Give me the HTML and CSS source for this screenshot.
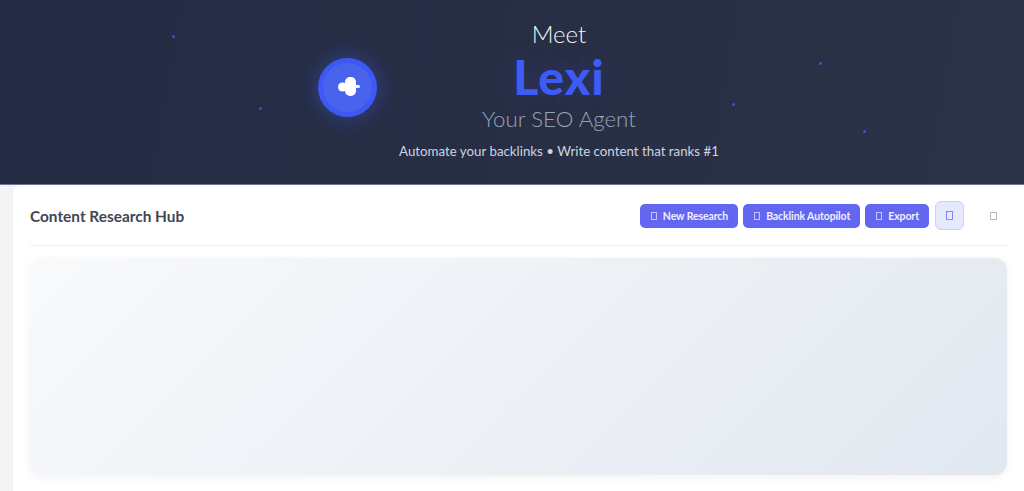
FILE: index.html
```html
<!DOCTYPE html>
<html>
<head>
    <title>Lexi - Content Research Hub</title>
    <link rel="stylesheet" href="styles.css">
</head>
<body>
    <header class="hero">
        <span class="star star-1"></span>
        <span class="star star-2"></span>
        <span class="star star-3"></span>
        <span class="star star-4"></span>
        <span class="star star-5"></span>
        <div class="logo">
            <div class="logo-inner">
                <svg width="24" height="20" viewBox="0 0 24 20">
                    <rect x="9" y="0" width="11" height="19" rx="5" fill="#fff"/>
                    <circle cx="6.500" cy="10" r="4.500" fill="#fff"/>
                    <rect x="16" y="8" width="8" height="3" rx="1.500" fill="#fff"/>
                </svg>
            </div>
        </div>
        <div class="hero-text">
            <div class="meet">Meet</div>
            <h1 class="name">Lexi</h1>
            <div class="role">Your SEO Agent</div>
            <p class="tagline">Automate your backlinks • Write content that ranks #1</p>
        </div>
    </header>

    <main class="card">
        <div class="card-head">
            <h2>Content Research Hub</h2>
            <div class="actions">
                <button class="btn"><i class="tofu"></i>New Research</button>
                <button class="btn"><i class="tofu"></i>Backlink Autopilot</button>
                <button class="btn"><i class="tofu"></i>Export</button>
                <button class="btn-soft"><i class="tofu tofu-blue"></i></button>
                <button class="btn-plain"><i class="tofu tofu-grey"></i></button>
            </div>
        </div>
        <div class="panel"></div>
    </main>
</body>
</html>
```

FILE: styles.css
```css
* { box-sizing: border-box; }
html, body { height: 100%; }
body { margin: 0; background: #f3f4f6; font-family: Lato, "Noto Sans", sans-serif; overflow: hidden; }

.hero { position: relative; height: 185px; padding: 0 0 4px 13px; display: flex; align-items: center; justify-content: center; gap: 22px; background: linear-gradient(100deg, #232a42, #2c3347); border-bottom: 1px solid #6d7599; }
.star { position: absolute; width: 3px; height: 3px; border-radius: 50%; background: #3b50e0; }
.star-1 { left: 172px; top: 35px; }
.star-2 { left: 259px; top: 107px; }
.star-3 { left: 819px; top: 62px; }
.star-4 { left: 732px; top: 103px; }
.star-5 { left: 863px; top: 130px; }

.logo { width: 59px; height: 59px; margin-bottom: 6px; padding: 5px; border-radius: 50%; background: #3d59f5; box-shadow: 0 0 22px rgba(63, 91, 246, 0.5); }
.logo-inner { width: 100%; height: 100%; border-radius: 50%; background: #4a63ec; display: flex; align-items: center; justify-content: center; }

.hero-text { text-align: center; width: 320px; }
.meet { font-size: 24px; font-weight: 300; line-height: 30px; color: #f1f5f9; }
.name { margin: 0; font-size: 48px; font-weight: 900; line-height: 56px; letter-spacing: 1px; color: #3f5bf6; text-shadow: 0 0 24px rgba(63, 91, 246, 0.25); }
.role { font-size: 22.300px; font-weight: 300; line-height: 28px; color: #94a3b8; }
.tagline { margin: 8px 0 0; font-size: 13.300px; line-height: 20px; white-space: nowrap; color: #cbd5e1; }

.card { height: 306px; margin-left: 13px; padding: 0 17px; background: #fff; border-radius: 8px 0 0 0; }
.card-head { height: 61px; padding-top: 1px; display: flex; align-items: center; justify-content: space-between; border-bottom: 1px solid #eceef2; }
.card-head h2 { margin: 0; font-size: 15.400px; font-weight: 700; color: #3f4656; }

.actions { display: flex; align-items: center; gap: 5px; }
.btn { height: 24px; padding: 0 10px 0 11px; display: flex; align-items: center; border: 0; border-radius: 5px; background: #6366f1; color: #eef0ff; font-family: inherit; font-size: 10.500px; font-weight: 700; letter-spacing: -0.1px; }
.btn-soft { width: 29px; height: 29px; margin-left: 1px; display: flex; align-items: center; justify-content: center; border: 1px solid #c7d2fe; border-radius: 6px; background: #e6e9fb; }
.btn-plain { width: 29px; height: 29px; margin-left: 10px; margin-right: -1px; display: flex; align-items: center; justify-content: center; border: 0; background: transparent; }

.tofu { width: 6px; height: 8px; margin-right: 6px; border: 1px solid #c3c6fa; display: block; }
.tofu-blue { width: 7px; height: 9px; margin: 0; border-color: #7f8bee; }
.tofu-grey { width: 7px; height: 8px; margin: 0; border-color: #b4b8c0; }

.panel { height: 217px; margin-top: 12px; border-radius: 12px; background: linear-gradient(135deg, #f8fafc, #e2e8f0); box-shadow: 0 2px 8px rgba(0, 0, 0, 0.06); }
```
